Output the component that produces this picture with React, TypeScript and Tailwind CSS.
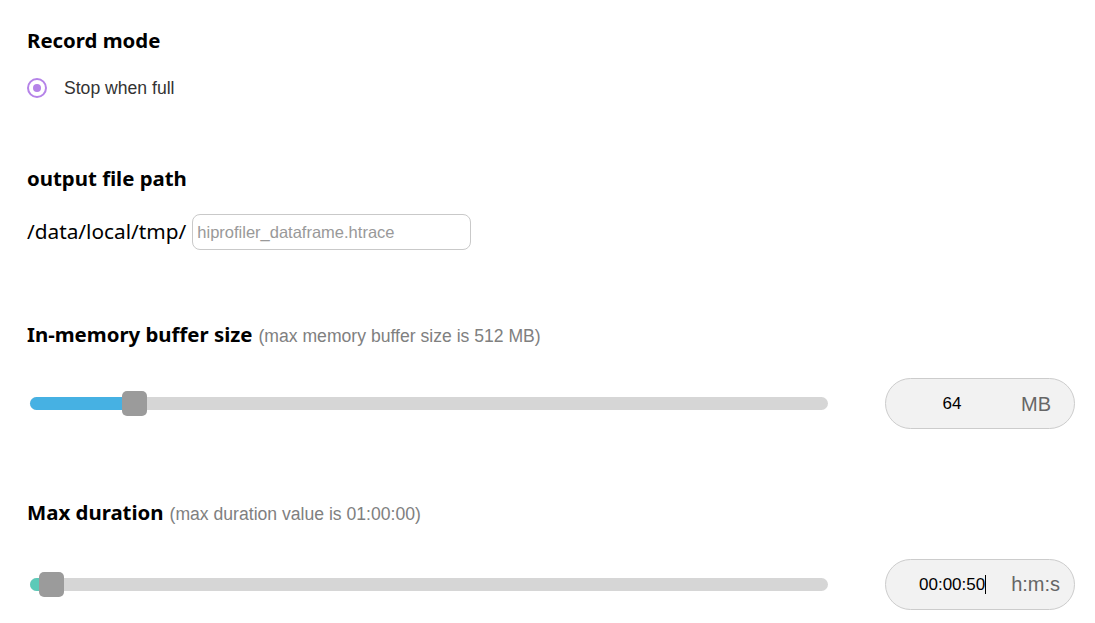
import React from "react";

const heading = "font-['Noto_Sans',sans-serif] font-bold text-[20.4px] leading-[28px] text-black";
const arial = "font-['Liberation_Sans',Arial,sans-serif]";

function Slider({ fill, pct, color }: { fill: number; pct: number; color: string }) {
  return (
    <div className="relative w-[798px] h-[13px] ml-[3px] rounded-[7px] bg-[#d6d6d6]">
      <div className={`absolute left-0 top-0 h-[13px] rounded-l-[7px] ${color}`} style={{ width: fill }} />
      <div
        className="absolute top-[-6px] w-[25px] h-[25px] rounded-[5px] bg-[#9b9b9b]"
        style={{ left: pct }}
      />
    </div>
  );
}

export default function App() {
  return (
    <div className="w-[1095px] h-[623px] overflow-hidden bg-white pl-[27px] pr-[20px] pt-[26px]">
      <div className={heading}>Record mode</div>
      <div className="flex items-center mt-[24px] h-[20px]">
        <div className="w-[20px] h-[20px] rounded-full border-[2px] border-[#b583e8] flex items-center justify-center">
          <div className="w-[8px] h-[8px] rounded-full bg-[#b583e8]" />
        </div>
        <span className={`${arial} ml-[17px] text-[17.6px] text-[#333]`}>Stop when full</span>
      </div>

      <div className={`${heading} mt-[66px]`}>output file path</div>
      <div className="flex items-center mt-[22px]">
        <span className="font-['Noto_Sans',sans-serif] text-[20.8px] text-black">/data/local/tmp/</span>
        <div className="ml-[6px] w-[279px] h-[36px] rounded-[8px] border border-[#c9c9c9] flex items-center pl-[4px]">
          <span className={`${arial} text-[16.5px] text-[#999]`}>hiprofiler_dataframe.htrace</span>
        </div>
      </div>

      <div className="flex items-baseline mt-[70px]">
        <span className={heading}>In-memory buffer size</span>
        <span className={`${arial} ml-[6px] text-[17.6px] text-[#808080]`}>(max memory buffer size is 512 MB)</span>
      </div>
      <div className="flex items-center mt-[29px]">
        <Slider fill={104} pct={92} color="bg-[#46b1e3]" />
        <div className="ml-auto w-[190px] h-[51px] rounded-full border border-[#cccccc] bg-[#f2f2f2] flex items-center">
          <span className={`${arial} w-[132px] text-center text-[17px] text-black`}>64</span>
          <span className={`${arial} ml-[3px] text-[20px] text-[#666]`}>MB</span>
        </div>
      </div>

      <div className="flex items-baseline mt-[69px]">
        <span className={heading}>Max duration</span>
        <span className={`${arial} ml-[6px] text-[17.6px] text-[#808080]`}>(max duration value is 01:00:00)</span>
      </div>
      <div className="flex items-center mt-[31px]">
        <Slider fill={12} pct={9} color="bg-[#5ccab8]" />
        <div className="ml-auto w-[190px] h-[51px] rounded-full border border-[#cccccc] bg-[#f2f2f2] flex items-center">
          <span className={`${arial} ml-[33px] text-[17px] text-black`}>00:00:50</span>
          <span className="w-[1px] h-[19px] bg-black" />
          <span className={`${arial} ml-[25px] text-[20px] text-[#666]`}>h:m:s</span>
        </div>
      </div>
    </div>
  );
}
